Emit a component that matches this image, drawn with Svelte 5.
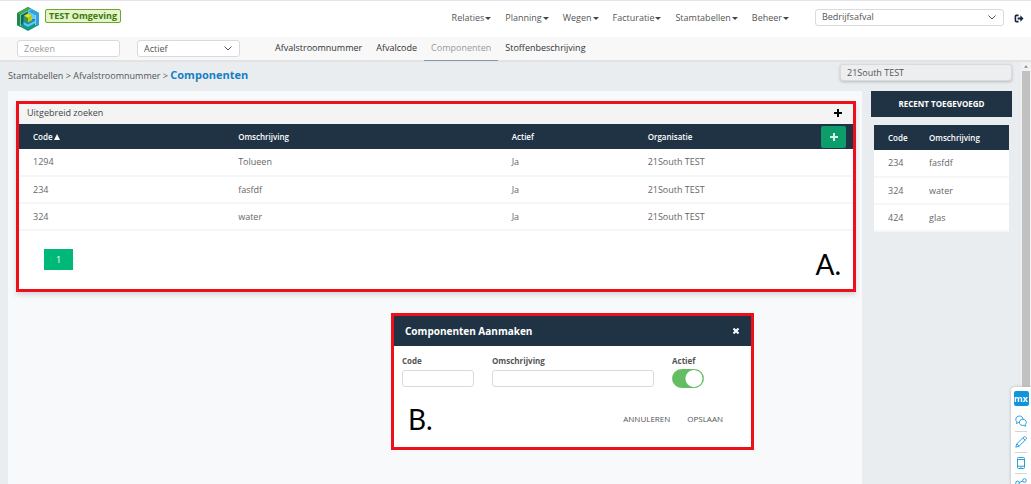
<script>
    let search = '';
    let status = 'Actief';
    let wasteType = 'Bedrijfsafval';
    let organisation = '21South TEST';
    let active = true;

    const menu = ['Relaties', 'Planning', 'Wegen', 'Facturatie', 'Stamtabellen', 'Beheer'];
    const tabs = ['Afvalstroomnummer', 'Afvalcode', 'Componenten', 'Stoffenbeschrijving'];

    const components = [
        { code: '1294', description: 'Tolueen', active: 'Ja', organisation: '21South TEST' },
        { code: '234', description: 'fasfdf', active: 'Ja', organisation: '21South TEST' },
        { code: '324', description: 'water', active: 'Ja', organisation: '21South TEST' }
    ];

    const recent = [
        { code: '234', description: 'fasfdf' },
        { code: '324', description: 'water' },
        { code: '424', description: 'glas' }
    ];
</script>

<div class="page">
    <header class="topbar">
        <svg class="logo" viewBox="0 0 22 24" aria-hidden="true">
            <path d="M11 0 22 6v12l-11 6L0 18V6z" fill="#0f9a82" />
            <path d="M11 0 22 6v11l-3.500 2V8L11 4z" fill="#2ba4e4" />
            <path d="M0 6 11 0l3 1.700L3.500 8v11.500L0 18z" fill="#3fa852" />
            <path d="M0 6l3.500 2v12L0 18z" fill="#1f8a48" />
            <path d="M11 4l7.500 4v8L11 20l-7.500-4V8z" fill="#1b86c9" />
            <path d="M11 4l7.500 4v4H15V9.500L11 7z" fill="#6cc6f2" />
            <path d="M3.500 8 11 4v3L6.500 9.500V18l-3-1.500z" fill="#0d6e52" />
            <path d="M6.500 15l4.500 2.500 7.500-4V16L11 20l-4.500-2.500z" fill="#63c8e6" />
            <path d="M3.500 19V8L14.500 2M18.500 8v10" fill="none" stroke="#c4e8e4" stroke-width=".6" />
            <path d="M11 6.500l4 2.300v4.500l-4 2.200-4-2.200V8.800z" fill="#3d9a3a" />
            <path d="M11 6.500l4 2.300-4 2.200-4-2.200z" fill="#dfe02c" />
            <path d="M11 11l4-2.200v4.500l-4 2.200z" fill="#b2cc22" />
        </svg>
        <span class="env">TEST Omgeving</span>
        <nav class="menu">
            {#each menu as item}
                <button type="button">{item}<i class="caret"></i></button>
            {/each}
        </nav>
        <div class="select waste">
            <select bind:value={wasteType} aria-label="Afvaltype">
                <option>Bedrijfsafval</option>
            </select>
            <svg viewBox="0 0 8 5" aria-hidden="true"><path d="M.5.5 4 4 7.500.5" /></svg>
        </div>
        <button type="button" class="logout" aria-label="Uitloggen">
            <svg viewBox="0 0 11 10" aria-hidden="true">
                <path d="M5 1.500H2.500Q1.500 1.500 1.500 2.500v5q0 1 1 1H5" fill="none" stroke="#14263c" stroke-width="1.800" />
                <path d="M4 4h3V1.500L10.500 5 7 8.500V6H4z" fill="#14263c" />
            </svg>
        </button>
    </header>

    <div class="subbar">
        <input class="search" type="text" placeholder="Zoeken" aria-label="Zoeken" bind:value={search} />
        <div class="select status">
            <select bind:value={status} aria-label="Status">
                <option>Actief</option>
            </select>
            <svg viewBox="0 0 8 5" aria-hidden="true"><path d="M.5.5 4 4 7.500.5" /></svg>
        </div>
        <nav class="tabs">
            {#each tabs as tab}
                <a href="#{tab}" class:current={tab === 'Componenten'}>{tab}</a>
            {/each}
        </nav>
    </div>

    <div class="body">
        <div class="workspace">
            <div class="heading">
                <div class="crumbs">
                    <a href="#stamtabellen">Stamtabellen</a> &gt;
                    <a href="#afvalstroomnummer">Afvalstroomnummer</a> &gt;
                    <strong>Componenten</strong>
                </div>
                <input class="organisation" type="text" aria-label="Organisatie" bind:value={organisation} />
            </div>

            <div class="columns">
                <main>
                    <section class="frame overview">
                        <button type="button" class="extended">
                            Uitgebreid zoeken
                            <svg viewBox="0 0 8 8" aria-hidden="true"><path d="M4 0v8M0 4h8" /></svg>
                        </button>
                        <table class="grid">
                            <colgroup>
                                <col class="c-code" />
                                <col class="c-desc" />
                                <col class="c-active" />
                                <col />
                            </colgroup>
                            <thead>
                                <tr>
                                    <th>Code<svg class="sort" viewBox="0 0 6 6" aria-hidden="true"><path d="M3 0l3 6H0z" /></svg></th>
                                    <th>Omschrijving</th>
                                    <th>Actief</th>
                                    <th>
                                        <div class="last">
                                            Organisatie
                                            <button type="button" class="add" aria-label="Toevoegen">
                                                <svg viewBox="0 0 8 8" aria-hidden="true"><path d="M4 0v8M0 4h8" /></svg>
                                            </button>
                                        </div>
                                    </th>
                                </tr>
                            </thead>
                            <tbody>
                                {#each components as row}
                                    <tr>
                                        <td>{row.code}</td>
                                        <td>{row.description}</td>
                                        <td>{row.active}</td>
                                        <td>{row.organisation}</td>
                                    </tr>
                                {/each}
                            </tbody>
                        </table>
                        <div class="foot">
                            <button type="button" class="pager">1</button>
                            <span class="mark">A.</span>
                        </div>
                    </section>

                    <section class="frame dialog">
                        <div class="dialog-head">
                            <h2>Componenten Aanmaken</h2>
                            <button type="button" aria-label="Sluiten">
                                <svg viewBox="0 0 6 6" aria-hidden="true"><path d="M.5.5l5 5M5.500.5l-5 5" /></svg>
                            </button>
                        </div>
                        <div class="fields">
                            <label class="f-code">Code<input type="text" /></label>
                            <label class="f-desc">Omschrijving<input type="text" /></label>
                            <label class="f-active">Actief
                                <input type="checkbox" class="toggle" bind:checked={active} />
                            </label>
                        </div>
                        <div class="actions">
                            <span class="mark">B.</span>
                            <button type="button">ANNULEREN</button>
                            <button type="button">OPSLAAN</button>
                        </div>
                    </section>
                </main>

                <aside>
                    <h2>RECENT TOEGEVOEGD</h2>
                    <table class="grid">
                        <colgroup>
                            <col class="r-code" />
                            <col />
                        </colgroup>
                        <thead>
                            <tr><th>Code</th><th>Omschrijving</th></tr>
                        </thead>
                        <tbody>
                            {#each recent as row}
                                <tr><td>{row.code}</td><td>{row.description}</td></tr>
                            {/each}
                        </tbody>
                    </table>
                </aside>
            </div>
        </div>
        <div class="scrollbar">
            <svg viewBox="0 0 6 4" aria-hidden="true"><path d="M3 0l3 4H0z" fill="#8a8a8a" /></svg>
            <div class="thumb"></div>
        </div>
    </div>

    <div class="tools">
        <button type="button" class="mx">mx</button>
        <button type="button" aria-label="Feedback">
            <svg viewBox="0 0 12 12">
                <path d="M4.500 1C2.500 1 .8 2.400.8 4.300c0 1 .4 1.800 1.100 2.400L1.500 8.500l2-1c.4.1.8.1 1.200.1M8 4.200C7.900 2.300 6.400 1 4.500 1" />
                <path d="M7.800 4.300c2 0 3.500 1.300 3.500 3 0 .9-.4 1.700-1 2.200l.4 1.700-1.900-.8c-2.300.4-4.500-1-4.500-3.100 0-1.700 1.600-3 3.500-3z" />
            </svg>
        </button>
        <button type="button" aria-label="Bewerken">
            <svg viewBox="0 0 12 12"><path d="M.8 11.200l1-3.400L9 .8q.7-.5 1.300 0l1 1q.5.600 0 1.200l-7.200 7.200zM7.800 2l2.300 2.300M1.800 7.800l2.400 2.400" /></svg>
        </button>
        <button type="button" aria-label="Mobiel">
            <svg viewBox="0 0 12 12"><rect x="2.500" y=".5" width="7" height="11" rx="1" /><path d="M2.500 2.500h7M2.500 9.200h7M5.500 10.400h1" /></svg>
        </button>
        <button type="button" aria-label="Delen">
            <svg viewBox="0 0 12 12"><circle cx="9.500" cy="2.500" r="1.800" /><circle cx="2.500" cy="5" r="1.800" /><circle cx="9" cy="9.500" r="1.800" /><path d="M4.200 4.400l3.600-1.300M4 6l3.500 2.500" /></svg>
        </button>
    </div>
</div>

<style>
    :global(body) {
        overflow: hidden;
    }

    .page {
        display: flex;
        flex-direction: column;
        height: 100vh;
        overflow: hidden;
        font: 9px/12px 'Open Sans', sans-serif;
        color: #555;
        background: #e9edf0;
    }

    .page * {
        box-sizing: border-box;
    }

    button {
        padding: 0;
        border: 0;
        background: none;
        font: inherit;
        color: inherit;
        cursor: pointer;
    }

    input,
    select {
        font: inherit;
        color: #555;
        background: #fff;
        border: 1px solid #d8dadd;
        border-radius: 3px;
        min-width: 0;
    }

    a {
        color: inherit;
        text-decoration: none;
    }

    svg {
        display: block;
    }

    .topbar {
        display: flex;
        align-items: center;
        flex: none;
        height: 37px;
        padding: 0 7px 2px 17px;
        border-top: 1px solid #e3e4ea;
        background: #fff;
    }

    .logo {
        width: 22px;
        height: 24px;
        margin-top: 2px;
    }

    .env {
        margin: 0 auto 5px 6px;
        padding: 0 3px;
        border: 1px solid #6fa52f;
        border-radius: 2px;
        background: #e3f5c9;
        color: #3c7a0a;
        font-weight: bold;
    }

    .menu {
        display: flex;
        gap: 14px;
    }

    .menu button {
        display: flex;
        align-items: center;
        gap: 1px;
    }

    .caret {
        border: 3px solid transparent;
        border-top-color: #444;
        border-bottom: 0;
    }

    .select {
        display: grid;
        align-items: center;
    }

    .select select,
    .select svg {
        grid-area: 1 / 1;
    }

    .select select {
        appearance: none;
        width: 100%;
        height: 17px;
        padding: 0 6px;
    }

    .select svg {
        justify-self: end;
        width: 8px;
        height: 5px;
        margin-right: 8px;
        fill: none;
        stroke: #555;
        pointer-events: none;
    }

    .waste {
        width: 189px;
        margin: 0 10px 2px 26px;
    }

    .logout svg {
        width: 10px;
        height: 9px;
    }

    .subbar {
        display: flex;
        align-items: center;
        flex: none;
        height: 25px;
        padding-left: 17px;
        border-bottom: 2px solid #e1e3e5;
        background: #f8f8f9;
    }

    .search {
        width: 103px;
        height: 17px;
        padding: 0 6px;
    }

    .search::placeholder {
        color: #999;
    }

    .status {
        width: 103px;
        margin-left: 17px;
    }

    .tabs {
        display: flex;
        align-self: stretch;
        margin-left: 28px;
        color: #333;
    }

    .tabs a {
        height: 24px;
        padding: 5px 7px 0;
    }

    .tabs .current {
        color: #999;
        border-bottom: 1px solid #8b97a5;
    }

    .body {
        display: flex;
        flex: 1;
        min-height: 0;
    }

    .workspace {
        display: flex;
        flex-direction: column;
        flex: 1;
        padding: 0 9px 0 8px;
    }

    .heading {
        display: flex;
        justify-content: space-between;
        height: 29px;
    }

    .crumbs {
        padding-top: 5px;
        line-height: 16px;
    }

    .crumbs strong {
        font-size: 11px;
        color: #1580c3;
    }

    .organisation {
        width: 172px;
        height: 17px;
        margin-top: 2px;
        padding: 0 6px;
        background: #eceef0;
        box-shadow: 0 1px 3px #b5babf;
    }

    .columns {
        display: flex;
        flex: 1;
        gap: 9px;
    }

    main {
        display: flex;
        flex-direction: column;
        flex: 1;
        padding: 10px 6px 0 8px;
        background: #f8f9fb;
    }

    .frame {
        border: 3px solid #ed0f19;
        background: #fff;
    }

    .overview {
        box-shadow: 0 3px 5px #d4d7da;
    }

    .extended {
        display: flex;
        align-items: center;
        justify-content: space-between;
        width: 100%;
        height: 20px;
        padding: 0 11px 2px 8px;
        background: #f4f4f4;
        color: #444;
    }

    .extended svg {
        width: 8px;
        height: 8px;
        stroke: #000;
        stroke-width: 2;
    }

    .grid {
        width: 100%;
        table-layout: fixed;
        border-collapse: collapse;
    }

    .c-code {
        width: 24.6%;
    }

    .c-desc {
        width: 32.8%;
    }

    .c-active {
        width: 16.3%;
    }

    .grid th,
    .grid td {
        padding: 0 7px 0 14px;
        text-align: left;
    }

    .grid th {
        height: 25px;
        background: #1f3345;
        color: #fff;
        font-size: 8px;
        font-weight: 600;
    }

    .grid td {
        height: 27px;
        border-bottom: 2px solid #f5f6f7;
        color: #666;
    }

    .sort {
        display: inline-block;
        width: 6px;
        height: 6px;
        margin-left: 1px;
        fill: #fff;
    }

    .last {
        display: flex;
        align-items: center;
        justify-content: space-between;
    }

    .add {
        display: grid;
        place-items: center;
        width: 25px;
        height: 22px;
        border-radius: 2px;
        background: #0c9d6b;
    }

    .add svg {
        width: 8px;
        height: 8px;
        stroke: #d8efe6;
        stroke-width: 2;
    }

    .foot {
        display: flex;
        align-items: flex-start;
        justify-content: space-between;
        height: 58px;
        padding: 18px 12px 0 25px;
    }

    .pager {
        width: 29px;
        height: 21px;
        background: #00b877;
        color: #fff;
    }

    .mark {
        font: 28px/30px Lato, sans-serif;
        color: #000;
    }

    .dialog {
        align-self: flex-end;
        width: 363px;
        margin: 21px 102px 0 0;
    }

    .dialog-head {
        display: flex;
        align-items: center;
        justify-content: space-between;
        height: 30px;
        padding: 0 12px 0 11px;
        background: #1f3345;
        color: #fff;
    }

    .dialog-head h2 {
        margin: 0;
        font-size: 10px;
    }

    .dialog-head svg {
        width: 6px;
        height: 6px;
        stroke: #fff;
        stroke-width: 2;
    }

    .fields {
        display: flex;
        gap: 18px;
        padding: 9px 8px 0;
    }

    .fields label {
        display: flex;
        flex-direction: column;
        gap: 2px;
        font-size: 8px;
        font-weight: bold;
    }

    .fields input {
        height: 17px;
        margin: 1px 0 0;
    }

    .f-code {
        width: 72px;
    }

    .f-desc {
        width: 162px;
    }

    .fields .toggle {
        appearance: none;
        width: 32px;
        height: 19px;
        margin: 0;
        border: 1px solid #64bd63;
        border-radius: 10px;
        background: radial-gradient(circle at 21px 50%, #fff 8px, #64bd63 9px);
    }

    .actions {
        display: flex;
        align-items: center;
        gap: 17px;
        padding: 16px 28px 13px 14px;
    }

    .actions .mark {
        margin-right: auto;
    }

    .actions button {
        font-size: 8px;
    }

    aside {
        width: 141px;
    }

    aside h2 {
        margin: 0 0 8px;
        background: #1f3345;
        color: #fff;
        font-size: 8px;
        line-height: 26px;
        text-align: center;
    }

    aside .grid {
        width: 135px;
        margin: 0 3px;
        background: #fff;
    }

    aside .r-code {
        width: 41px;
    }

    .scrollbar {
        display: flex;
        flex-direction: column;
        align-items: center;
        width: 10px;
        background: #f1f1f1;
    }

    .scrollbar svg {
        width: 4px;
        height: 3px;
        margin: 3px 0;
    }

    .thumb {
        flex: 1;
        width: 8px;
        background: #c1c1c1;
    }

    /* Floating toolbar, hangs over the right edge */
    .tools {
        position: fixed;
        right: 0;
        top: 80%;
        display: flex;
        flex-direction: column;
        align-items: center;
        width: 20px;
        padding-top: 4px;
        border-radius: 4px 0 0 4px;
        background: #fff;
        box-shadow: 0 0 3px #aab0b5;
    }

    .tools button {
        display: grid;
        place-items: center;
        width: 12px;
        height: 21px;
        border-bottom: 1px solid #d5d5d5;
    }

    .tools .mx {
        width: 15px;
        height: 15px;
        margin-bottom: 5px;
        border: 0;
        border-radius: 2px;
        background: #0f95db;
        color: #fff;
        font-weight: bold;
    }

    .tools svg {
        width: 12px;
        height: 12px;
        fill: none;
        stroke: #2a9fdc;
    }
</style>
